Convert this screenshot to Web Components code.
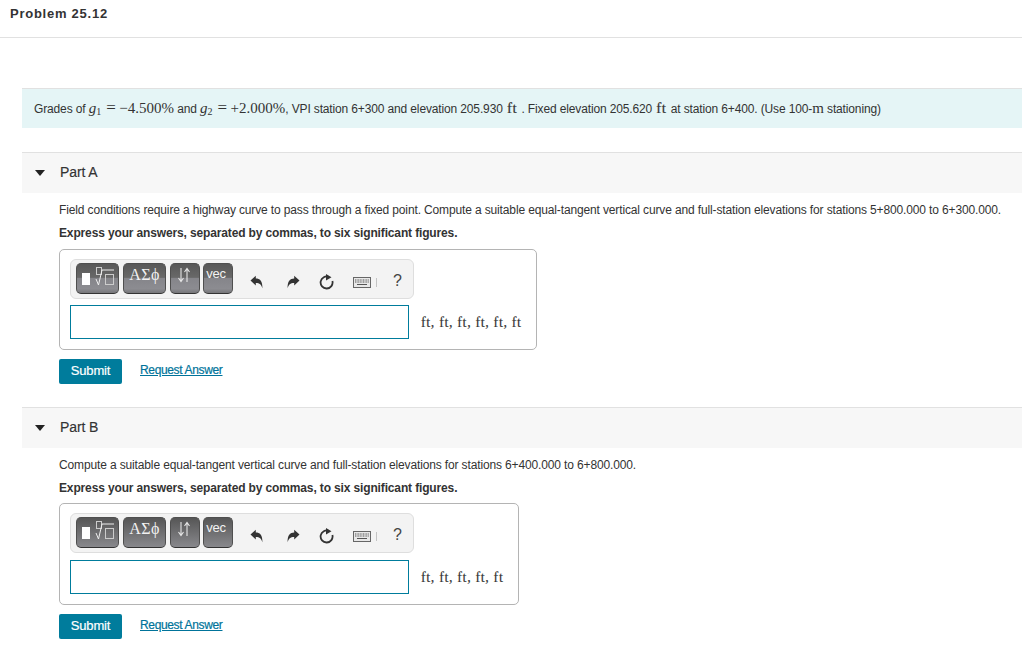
<!DOCTYPE html>
<html>
<head>
<meta charset="utf-8">
<title>Problem 25.12</title>
<style>
  html, body { margin: 0; background: #fff; }
  body { font-family: "Liberation Sans", Arial, sans-serif; font-size: 12px; color: #333; overflow: hidden; }
</style>
</head>
<body>
<problem-header>Problem 25.12</problem-header>
<problem-banner>
  Grades of <m-i>g</m-i><m-sub>1</m-sub><m-eq>=</m-eq><m-n>&minus;4.500%</m-n> and <m-i>g</m-i><m-sub>2</m-sub><m-eq>=</m-eq><m-n>+2.000%</m-n>, VPI station 6+300 and elevation 205.930 <m-n unit>ft</m-n> . Fixed elevation 205.620 <m-n unit>ft</m-n> at station 6+400. (Use 100-<m-n>m</m-n> stationing)
</problem-banner>

<part-section label="Part A" box-height="101" hint-gap="9" row-gap="6" box-width="478" units="ft, ft, ft, ft, ft, ft">
  Field conditions require a highway curve to pass through a fixed point. Compute a suitable equal-tangent vertical curve and full-station elevations for stations 5+800.000 to 6+300.000.
</part-section>

<part-section label="Part B" box-height="102" hint-gap="8" row-gap="7" box-width="460" units="ft, ft, ft, ft, ft" smooth>
  Compute a suitable equal-tangent vertical curve and full-station elevations for stations 6+400.000 to 6+800.000.
</part-section>

<script>
class ProblemHeader extends HTMLElement {
  constructor() {
    super();
    this.attachShadow({mode: "open"});
    this.shadowRoot.innerHTML = `
      <style>
        :host { display: block; border-bottom: 1px solid #e1e1e1; padding: 7px 0 0 10px; height: 30px; font-size: 13px; letter-spacing: .75px; font-weight: bold; line-height: 14px; color: #333; }
      </style>
      <slot></slot>`;
  }
}
customElements.define("problem-header", ProblemHeader);

class ProblemBanner extends HTMLElement {
  constructor() {
    super();
    this.attachShadow({mode: "open"});
    this.shadowRoot.innerHTML = `
      <style>
        :host { display: block; margin: 50px 0 24px 22px; height: 39px; border-top: 1px solid #e1e1e1; background: #e5f5f6; padding-left: 12px; font-size: 12px; letter-spacing: -.14px; line-height: 38px; white-space: nowrap; color: #333; }
      </style>
      <slot></slot>`;
  }
}
customElements.define("problem-banner", ProblemBanner);

// the bits of math in the banner
class MathNum extends HTMLElement {
  constructor() {
    super();
    this.attachShadow({mode: "open"});
    this.shadowRoot.innerHTML = `<style>
      :host { display: inline; font-family: "Liberation Serif", serif; font-size: 15px; letter-spacing: 0; }
      :host([unit]) { letter-spacing: .6px; padding: 0 1px; -webkit-text-stroke: .2px #333; }
    </style><slot></slot>`;
  }
}
customElements.define("m-n", MathNum);

class MathEq extends HTMLElement {
  constructor() {
    super();
    this.attachShadow({mode: "open"});
    this.shadowRoot.innerHTML = `<style>:host { display: inline; font-family: "Liberation Serif", serif; font-size: 17px; letter-spacing: 0; padding: 0 3.500px 0 5px; }</style><slot></slot>`;
  }
}
customElements.define("m-eq", MathEq);

class MathIdent extends HTMLElement {
  constructor() {
    super();
    this.attachShadow({mode: "open"});
    this.shadowRoot.innerHTML = `<style>:host { display: inline; font-family: "Liberation Serif", serif; font-size: 15px; font-style: italic; letter-spacing: 0; }</style><slot></slot>`;
  }
}
customElements.define("m-i", MathIdent);

class MathSub extends HTMLElement {
  constructor() {
    super();
    this.attachShadow({mode: "open"});
    this.shadowRoot.innerHTML = `<style>:host { display: inline; font-family: "Liberation Serif", serif; font-size: 10px; letter-spacing: 0; vertical-align: -2px; line-height: 0; }</style><slot></slot>`;
  }
}
customElements.define("m-sub", MathSub);

class ToolButton extends HTMLElement {
  constructor() {
    super();
    this.attachShadow({mode: "open"});
    const smooth = this.hasAttribute("smooth");
    const bg = smooth
      ? "linear-gradient(#565656, #88888c)"
      : "linear-gradient(#585858 0, #686868 46%, #85858a 50%, #8c8c91 85%, #77777a 100%)";
    this.shadowRoot.innerHTML = `
      <style>
        :host { display: flex; align-items: center; justify-content: center; width: ${this.getAttribute("w")}px; height: 31px; box-sizing: border-box; border-radius: 5px; border: 1px solid #4f4f4f; border-bottom-color: #333; background: ${bg}; color: #f2f2f2; overflow: hidden; }
      </style>
      <slot></slot>`;
  }
}
customElements.define("tool-button", ToolButton);

class MathToolbar extends HTMLElement {
  constructor() {
    super();
    this.attachShadow({mode: "open"});
    const s = this.hasAttribute("smooth") ? "smooth" : "";
    this.shadowRoot.innerHTML = `
      <style>
        :host { display: flex; align-items: center; width: 344px; height: 40px; box-sizing: border-box; padding-left: 5px; background: #f3f3f3; border: 1px solid #dedede; border-radius: 6px; }
        .group { display: flex; gap: 4px; margin-top: -1px; }
        .group tool-button:nth-child(4) { margin-left: -1px; }
        .sym { font-family: "Liberation Serif", serif; font-size: 16px; letter-spacing: .4px; margin-top: -8px; }
        .vec { font-size: 13px; letter-spacing: -.2px; margin: -11px 4px 0 0; }
        svg { display: block; }
        .undo { margin: 6px 0 0 17px; }
        .redo { margin: 6px 0 0 24px; }
        .reset { margin: 6px 0 0 19px; }
        .keys { margin: 7px 0 0 19px; }
        .sep { width: 1px; height: 9px; background: #c4c4c4; margin: 7px 0 0 5px; }
        .help { margin: 4px 0 0 16px; font-size: 16px; color: #444; }
      </style>
      <div class="group">
        <tool-button w="43" ${s}>
          <svg width="41" height="29" viewBox="0 0 41 29">
            <rect x="5" y="9" width="8" height="12" fill="#fff"/>
            <rect x="19.500" y="3.500" width="5" height="7" fill="none" stroke="#ccc"/>
            <path d="M19 15l2.500 6 3.500-15h12" fill="none" stroke="#eee" stroke-width="1"/>
            <rect x="28.500" y="10.500" width="8" height="10" fill="none" stroke="#ccc"/>
          </svg>
        </tool-button>
        <tool-button w="43" ${s}><span class="sym">&Alpha;&Sigma;&#981;</span></tool-button>
        <tool-button w="30" ${s}>
          <svg width="14" height="16" viewBox="0 0 14 16" style="margin:-7px 3px 0 0">
            <path d="M4 1v13M1.500 11l2.500 3.500 2.500-3.500M10 15V2M7.500 5l2.500-3.500 2.500 3.500" fill="none" stroke="#e6e6e6" stroke-width="1.100"/>
          </svg>
        </tool-button>
        <tool-button w="30" ${s}><span class="vec">vec</span></tool-button>
      </div>
      <svg class="undo" width="13" height="14" viewBox="0 0 13 14"><path d="M0.500 5.500L5.800 0.800V3.400C10 3.400 12.600 6 12.400 13.200 11.300 9.600 9.800 7.900 5.800 7.900V10.400Z" fill="#333"/></svg>
      <svg class="redo" width="13" height="14" viewBox="0 0 13 14"><path d="M12.500 5.500L7.200 0.800V3.400C3 3.400 .4 6 .6 13.200 1.700 9.600 3.200 7.900 7.200 7.900V10.400Z" fill="#333"/></svg>
      <svg class="reset" width="15" height="16" viewBox="0 0 15 16"><path d="M10 3A6 6 0 1 0 13.400 7" fill="none" stroke="#333" stroke-width="1.800"/><path d="M7 0L12.500 3.300 7 6.500Z" fill="#333"/></svg>
      <svg class="keys" width="18" height="11" viewBox="0 0 18 11"><rect x=".5" y=".5" width="17" height="10" fill="#e8e8e8" stroke="#666"/><path d="M2 3h14M2 5h14" stroke="#555" stroke-dasharray="1 .6"/><path d="M4 7.500h10" stroke="#555"/></svg>
      <div class="sep"></div>
      <div class="help">?</div>`;
  }
}
customElements.define("math-toolbar", MathToolbar);

class AnswerBox extends HTMLElement {
  constructor() {
    super();
    this.attachShadow({mode: "open"});
    const s = this.hasAttribute("smooth") ? "smooth" : "";
    this.shadowRoot.innerHTML = `
      <style>
        :host { display: block; width: ${this.getAttribute("box-width")}px; height: ${this.getAttribute("box-height")}px; box-sizing: border-box; padding: 9px 0 0 10px; border: 1px solid #b4b4b4; border-radius: 5px; background: #fff; }
        .row { display: flex; align-items: center; margin-top: ${this.getAttribute("row-gap")}px; gap: 12px; }
        .field { width: 339px; height: 34px; box-sizing: border-box; border: 1px solid #007c9c; background: #fff; }
        .units { font-family: "Liberation Serif", serif; font-size: 14px; color: #333; white-space: nowrap; letter-spacing: .65px; margin-top: 1px; -webkit-text-stroke: .15px #333; }
      </style>
      <math-toolbar ${s}></math-toolbar>
      <div class="row">
        <div class="field"></div>
        <div class="units">${this.getAttribute("units")}</div>
      </div>`;
  }
}
customElements.define("answer-box", AnswerBox);

class PartSection extends HTMLElement {
  constructor() {
    super();
    this.attachShadow({mode: "open"});
    const s = this.hasAttribute("smooth") ? "smooth" : "";
    const attr = (n) => this.getAttribute(n);
    this.shadowRoot.innerHTML = `
      <style>
        :host { display: block; margin: 0 0 23px 22px; }
        .head { display: flex; align-items: center; height: 41px; box-sizing: border-box; padding-bottom: 2px; background: #f7f7f7; border-top: 1px solid #e1e1e1; font-size: 14px; letter-spacing: -.1px; color: #333; -webkit-text-stroke: .15px #333; }
        .arrow { width: 0; height: 0; margin: 2px 15px 0 13px; border-left: 5.500px solid transparent; border-right: 5.500px solid transparent; border-top: 6px solid #222; }
        .body { padding-left: 37px; }
        p { margin: 0; font-size: 12px; letter-spacing: -.137px; line-height: 14px; white-space: nowrap; }
        .intro { padding-top: 10px; }
        .hint { padding-top: 9px; font-weight: bold; letter-spacing: -.14px; margin-bottom: ${attr("hint-gap")}px; }
        .actions { display: flex; align-items: center; margin-top: 9px; gap: 18px; }
        .submit { width: 63px; height: 25px; box-sizing: border-box; padding-bottom: 2px; display: flex; align-items: center; justify-content: center; background: #007c9c; color: #fff; font-size: 13px; letter-spacing: -.15px; border-radius: 2px; -webkit-text-stroke: .2px #fff; }
        .req { color: #00739a; font-size: 12px; letter-spacing: -.35px; padding-bottom: 4px; text-decoration: underline; -webkit-text-stroke: .2px #00739a; }
      </style>
      <div class="head"><span class="arrow"></span>${attr("label")}</div>
      <div class="body">
        <p class="intro"><slot></slot></p>
        <p class="hint">Express your answers, separated by commas, to six significant figures.</p>
        <answer-box box-width="${attr("box-width")}" box-height="${attr("box-height")}" row-gap="${attr("row-gap")}" units="${attr("units")}" ${s}></answer-box>
        <div class="actions"><span class="submit">Submit</span><span class="req">Request Answer</span></div>
      </div>`;
  }
}
customElements.define("part-section", PartSection);
</script>
</body>
</html>
